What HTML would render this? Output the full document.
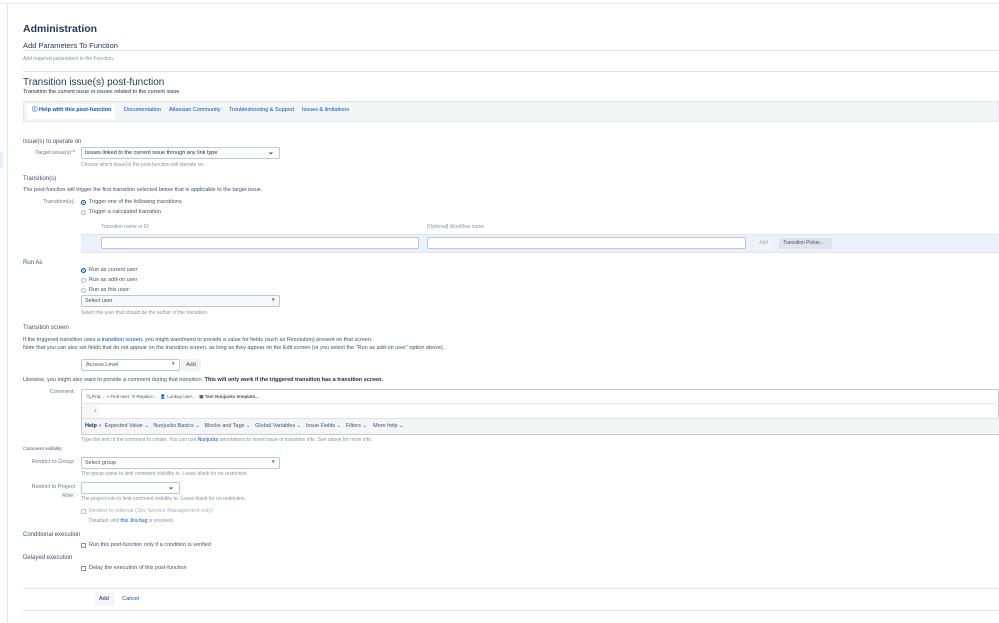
<!DOCTYPE html>
<html><head><meta charset="utf-8"><style>
*{margin:0;padding:0;box-sizing:border-box}
body{width:999px;height:623px;background:#fff;font-family:"Liberation Sans",sans-serif;color:#172b4d;position:relative;overflow:hidden}
.a{position:absolute;white-space:nowrap;line-height:1}
.s{font-size:5.5px;color:#42526e}
.h{font-size:5px;color:#8993a4}
.l{color:#0052cc}
.box{position:absolute;border:1px solid #c1c7d0;background:#fff;border-radius:2px}
.hr{position:absolute;height:1px;background:#dfe1e6}
.rad{position:absolute;width:5px;height:5px;border:1px solid #8993a4;border-radius:50%;background:#fff}
.rad.on{background:#0052cc;border-color:#0052cc;box-shadow:inset 0 0 0 1px #fff}
.cb{position:absolute;width:5px;height:5px;border:1px solid #8993a4;background:#fff}
.lab{position:absolute;font-size:5.5px;color:#6b778c;text-align:right;width:60px;line-height:1.6}
</style></head><body>
<div class="hr" style="top:3px;left:0;width:999px;background:#e8e8e8"></div>
<div style="position:absolute;left:7px;top:3px;width:1px;height:620px;background:#e4e4e4"></div>
<div style="position:absolute;left:0;top:152px;width:3px;height:16px;background:#e6effc"></div>

<div class="a" style="left:23px;top:24px;font-size:10.5px;font-weight:bold;color:#253858">Administration</div>
<div class="a" style="left:23px;top:42px;font-size:7.5px;color:#253858">Add Parameters To Function</div>
<div class="hr" style="top:50px;left:23px;width:976px"></div>
<div class="a h" style="left:23px;top:57px;font-size:5px">Add required parameters to the Function.</div>
<div class="hr" style="top:71px;left:23px;width:976px"></div>
<div class="a" style="left:23px;top:78px;font-size:10px;color:#253858">Transition issue(s) post-function</div>
<div class="a s" style="left:23px;top:90px;color:#172b4d">Transition the current issue or issues related to the current issue.</div>

<div style="position:absolute;left:23px;top:101px;width:976px;height:21px;background:#f4f5f7;border:1px solid #e4e6ea"></div>
<div style="position:absolute;left:27px;top:104px;width:88px;height:15px;background:#fff"></div>
<div class="a l" style="left:32px;top:108px;font-size:5.5px;font-weight:bold">ⓘ Help with this post-function</div>
<div class="a l" style="left:124px;top:108px;font-size:5.5px">Documentation</div>
<div class="a l" style="left:169px;top:108px;font-size:5.5px">Atlassian Community</div>
<div class="a l" style="left:229px;top:108px;font-size:5.5px">Troubleshooting &amp; Support</div>
<div class="a l" style="left:302px;top:108px;font-size:5.5px">Issues &amp; limitations</div>

<div class="a" style="left:23px;top:139px;font-size:6px;color:#42526e">Issue(s) to operate on</div>
<div class="lab" style="left:15px;top:149px">Target issue(s):<span style="color:#de350b">*</span></div>
<div class="box" style="left:81px;top:147px;width:199px;height:12px"></div>
<div class="a" style="left:85px;top:151px;font-size:5.5px">Issues linked to the current issue through any link type</div>
<div class="a" style="left:268px;top:149px;font-size:7px;font-weight:bold">⌄</div>
<div class="a h" style="left:81px;top:163px">Choose which issue(s) the post-function will operate on.</div>

<div class="a" style="left:23px;top:176px;font-size:6px;color:#42526e">Transition(s)</div>
<div class="a s" style="left:23px;top:188px">The post-function will trigger the first transition selected below that is applicable to the target issue.</div>
<div class="lab" style="left:15px;top:198px">Transition(s):</div>
<div class="rad on" style="left:81px;top:200px"></div>
<div class="a s" style="left:89px;top:200px">Trigger one of the following transitions</div>
<div class="rad" style="left:81px;top:210px;border-color:#b3b9c4"></div>
<div class="a s" style="left:89px;top:210px">Trigger a calculated transition</div>
<div class="a h" style="left:101px;top:225px">Transition name or ID</div>
<div class="a h" style="left:427px;top:225px">[Optional] Workflow name</div>
<div style="position:absolute;left:81px;top:234px;width:918px;height:19px;background:#ebf1fa;border-top:1px solid #dfe5ee;border-bottom:1px solid #dfe5ee"></div>
<div class="box" style="left:101px;top:237px;width:318px;height:12px"></div>
<div class="box" style="left:427px;top:237px;width:319px;height:12px"></div>
<div style="position:absolute;left:754px;top:238px;width:19px;height:11px;background:#f1f3f6"></div>
<div class="a" style="left:759px;top:241px;font-size:5px;color:#a5adba">Add</div>
<div style="position:absolute;left:779px;top:238px;width:53px;height:11px;background:#dfe3ea"></div>
<div class="a" style="left:783px;top:241px;font-size:5px;color:#42526e">Transition Picker...</div>

<div class="a" style="left:23px;top:260px;font-size:6px;color:#42526e">Run As</div>
<div class="rad on" style="left:81px;top:268px"></div><div class="a s" style="left:89px;top:268px">Run as current user</div>
<div class="rad" style="left:81px;top:278px;border-color:#b3b9c4"></div><div class="a s" style="left:89px;top:278px">Run as add-on user</div>
<div class="rad" style="left:81px;top:288px;border-color:#b3b9c4"></div><div class="a s" style="left:89px;top:288px">Run as this user:</div>
<div class="box" style="left:81px;top:295px;width:199px;height:12px;background:#f7f8f9"></div>
<div class="a s" style="left:85px;top:299px">Select user</div>
<div class="a" style="left:272px;top:298px;font-size:5px;color:#0052cc">▾</div>
<div class="a h" style="left:81px;top:311px">Select the user that should be the author of the transition.</div>

<div class="a" style="left:23px;top:325px;font-size:6px;color:#42526e">Transition screen</div>
<div class="a s" style="left:23px;top:338px">If the triggered transition uses a <span class="l">transition screen</span>, you might want/need to provide a value for fields (such as Resolution) present on that screen.</div>
<div class="a s" style="left:23px;top:346px">Note that you can also set fields that do not appear on the transition screen, as long as they appear on the Edit screen (or you select the "Run as add-on user" option above).</div>
<div class="box" style="left:81px;top:359px;width:99px;height:12px"></div>
<div class="a s" style="left:86px;top:363px">Access Level</div>
<div class="a" style="left:172px;top:362px;font-size:5px;color:#42526e">▾</div>
<div style="position:absolute;left:181px;top:359px;width:20px;height:12px;background:#f1f2f4"></div>
<div class="a s" style="left:186px;top:363px">Add</div>
<div class="a s" style="left:23px;top:378px">Likewise, you might also want to provide a comment during that transition. <b style="color:#172b4d">This will only work if the triggered transition has a transition screen.</b></div>

<div class="lab" style="left:15px;top:388px">Comment:</div>
<div style="position:absolute;left:81px;top:389px;width:918px;height:46px;border:1px solid #c8ccd2;background:#fff"></div>
<div class="hr" style="left:81px;top:403px;width:918px;background:#e4e6ea"></div>
<div style="position:absolute;left:82px;top:418px;width:917px;height:16px;background:#f4f5f7;border-top:1px solid #dfe1e6"></div>
<div class="a" style="left:86px;top:395px;font-size:4.5px;color:#42526e">🔍Find... &nbsp;» Find next &nbsp;⟲ Replace... &nbsp;&nbsp;👤 Lookup user... &nbsp;&nbsp;<b>▣ Test Nunjucks template...</b></div>
<div style="position:absolute;left:82px;top:404px;width:18px;height:14px;background:#f7f7f7"></div>
<div class="a" style="left:94px;top:409px;font-size:4.5px;color:#8993a4">1</div>
<div class="a s" style="left:85px;top:424px"><b style="color:#172b4d">Help</b> » &nbsp;Expected Value ⌄ &nbsp; Nunjucks Basics ⌄ &nbsp; Blocks and Tags ⌄ &nbsp; Global Variables ⌄ &nbsp; Issue Fields ⌄ &nbsp; Filters ⌄ &nbsp;&nbsp; More help ⌄</div>
<div class="a h" style="left:81px;top:438px">Type the text of the comment to create. You can use <span class="l">Nunjucks</span> annotations to insert issue or transition info. See above for more info.</div>

<div class="a" style="left:23px;top:448px;font-size:4.8px;color:#42526e">Comment visibility</div>
<div class="lab" style="left:15px;top:458px">Restrict to Group:</div>
<div class="box" style="left:81px;top:457px;width:199px;height:12px"></div>
<div class="a s" style="left:85px;top:461px">Select group</div>
<div class="a" style="left:272px;top:460px;font-size:5px;color:#0052cc">▾</div>
<div class="a h" style="left:81px;top:472px">The group name to limit comment visibility to. Leave blank for no restriction.</div>
<div class="lab" style="left:15px;top:483px">Restrict to Project<br>Role:</div>
<div class="box" style="left:81px;top:482px;width:99px;height:12px"></div>
<div class="a" style="left:168px;top:484px;font-size:7px;font-weight:bold">⌄</div>
<div class="a h" style="left:81px;top:497px">The project role to limit comment visibility to. Leave blank for no restriction.</div>
<div class="cb" style="left:81px;top:509px;border-color:#c1c7d0"></div>
<div class="a" style="left:89px;top:509px;font-size:5.5px;color:#a5adba">Restrict to Internal (Jira Service Management only)</div>
<div class="a h" style="left:89px;top:519px">Disabled until <span class="l">this Jira bug</span> is resolved.</div>

<div class="a" style="left:23px;top:532px;font-size:6px;color:#42526e">Conditional execution</div>
<div class="cb" style="left:81px;top:543px"></div>
<div class="a s" style="left:89px;top:543px">Run this post-function only if a condition is verified</div>
<div class="a" style="left:23px;top:555px;font-size:6px;color:#42526e">Delayed execution</div>
<div class="cb" style="left:81px;top:566px"></div>
<div class="a s" style="left:89px;top:566px">Delay the execution of this post-function</div>

<div class="hr" style="top:588px;left:23px;width:976px"></div>
<div style="position:absolute;left:95px;top:593px;width:19px;height:13px;background:#f4f5f7"></div>
<div class="a s" style="left:99px;top:597px;color:#172b4d">Add</div>
<div class="a l" style="left:122px;top:597px;font-size:5.5px">Cancel</div>
<div class="hr" style="top:610px;left:23px;width:976px"></div>
</body></html>
